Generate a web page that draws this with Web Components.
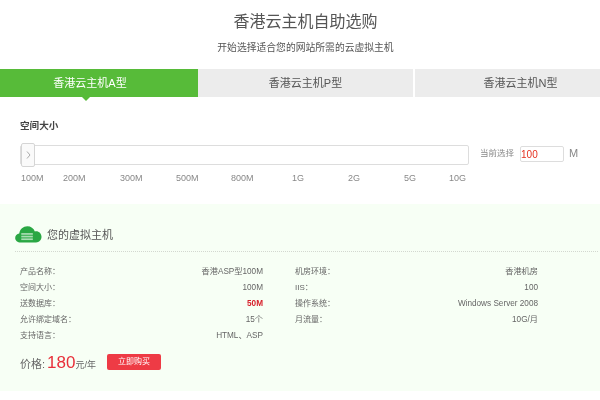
<!DOCTYPE html>
<html lang="zh">
<head>
<meta charset="utf-8">
<title>香港云主机自助选购</title>
<style>
    html, body { margin: 0; padding: 0; background: #fff; }
    body {
        width: 600px;
        height: 400px;
        overflow: hidden;
        font-family: "Liberation Sans", "Noto Sans CJK SC", sans-serif;
        color: #555;
    }
</style>
</head>
<body>
<page-header title="香港云主机自助选购" sub="开始选择适合您的网站所需的云虚拟主机"></page-header>
<tab-bar>
    <tab-item active style="width:198px;padding-right:18px">香港云主机A型</tab-item>
    <tab-item style="width:215px">香港云主机P型</tab-item>
    <tab-item style="flex:1;padding-left:26px">香港云主机N型</tab-item>
</tab-bar>
<space-picker></space-picker>
<host-summary>
    <spec-row slot="left" label="产品名称：">香港ASP型100M</spec-row>
    <spec-row slot="left" label="空间大小：">100M</spec-row>
    <spec-row slot="left" label="送数据库：" hot>50M</spec-row>
    <spec-row slot="left" label="允许绑定域名：">15个</spec-row>
    <spec-row slot="left" label="支持语言：">HTML、ASP</spec-row>
    <spec-row slot="right" label="机房环境：">香港机房</spec-row>
    <spec-row slot="right" label="IIS：">100</spec-row>
    <spec-row slot="right" label="操作系统：">Windows Server 2008</spec-row>
    <spec-row slot="right" label="月流量：">10G/月</spec-row>
</host-summary>

<script>
// small helper, every element just sets its markup once
class BaseEl extends HTMLElement {
    constructor() {
        super();
        this.attachShadow({mode: "open"});
    }
    connectedCallback() {
        this.shadowRoot.innerHTML = `<style>${this.getStyles()}</style>${this.getMarkup()}`;
    }
}

class PageHeader extends BaseEl {
    getStyles() {
        return `
            :host { display: block; height: 69px; padding: 13px 0 0 11px; box-sizing: border-box; text-align: center; filter: blur(.4px); }
            h1 { margin: 0; font-size: 16px; line-height: 18px; font-weight: 400; color: #555; }
            p { margin: 10px 0 0; font-size: 9.8px; line-height: 14px; color: #555; }
        `;
    }
    getMarkup() {
        return `<h1>${this.getAttribute("title")}</h1><p>${this.getAttribute("sub")}</p>`;
    }
}

class TabBar extends BaseEl {
    getStyles() {
        return `:host { display: flex; gap: 2px; height: 28px; } ::slotted(tab-item:first-child) { margin-right: -2px; }`;
    }
    getMarkup() { return `<slot></slot>`; }
}

class TabItem extends BaseEl {
    getStyles() {
        return `
            :host { display: block; position: relative; box-sizing: border-box; background: #ececec; color: #555; font-size: 11px; line-height: 28px; text-align: center; }
            :host([active]) { background: #57bb39; color: #fff; }
            span { display: block; filter: blur(.35px); }
            :host([active]) i {
                position: absolute; left: 82px; top: 28px; width: 0; height: 0;
                border: 4px solid transparent; border-top-color: #57bb39; border-bottom: 0;
            }
        `;
    }
    getMarkup() { return `<span><slot></slot></span><i></i>`; }
}

class SpacePicker extends BaseEl {
    getStyles() {
        return `
            :host { display: block; height: 107px; padding: 22px 20px 0; box-sizing: border-box; filter: blur(.4px); }
            h2 { margin: 0; font-size: 9.6px; line-height: 14px; font-weight: 700; color: #444; }
            .line { display: flex; align-items: center; margin-top: 10px; height: 24px; }
            .track { width: 449px; height: 20px; flex: none; box-sizing: border-box; border: 1px solid #ddd; border-radius: 2px; background: #fff; display: flex; align-items: center; }
            .knob { width: 14px; height: 24px; flex: none; box-sizing: border-box; border: 1px solid #d5d5d5; border-radius: 2px; background: #fafafa; display: flex; align-items: center; justify-content: center; }
            .now { margin: 0 0 6px 11px; font-size: 8.5px; color: #888; }
            .val { width: 44px; height: 16px; margin: 0 0 2px 6px; box-sizing: border-box; border: 1px solid #ddd; border-radius: 2px; color: #e5301f; font-size: 10px; line-height: 16px; }
            .unit { margin: 0 0 4px 5px; font-size: 11px; color: #888; }
            .scale { display: grid; grid-template-columns: 42px 57px 56px 55px 61px 56px 56px 45px 30px; margin: 4px 0 0 1px; font-size: 9px; line-height: 14px; color: #888; }
        `;
    }
    getMarkup() {
        const marks = ["100M","200M","300M","500M","800M","1G","2G","5G","10G"];
        return `
            <h2>空间大小</h2>
            <div class="line">
                <div class="track">
                    <div class="knob"><svg width="5" height="8" viewBox="0 0 5 8"><path d="M1 .5 4 4 1 7.5" fill="none" stroke="#aaa" stroke-width="1"/></svg></div>
                </div>
                <span class="now">当前选择</span>
                <div class="val">100</div>
                <span class="unit">M</span>
            </div>
            <div class="scale">${marks.map(m => `<span>${m}</span>`).join("")}</div>
        `;
    }
}

class HostSummary extends BaseEl {
    getStyles() {
        return `
            :host { display: block; height: 187px; padding: 21px 2px 0 15px; box-sizing: border-box; background: #f7fff5; }
            .inner { filter: blur(.4px); }
            .head { display: flex; align-items: center; gap: 5px; height: 18px; color: #555; font-size: 11px; }
            .rule { border-top: 1px dotted #d3d8d0; margin-top: 8px; }
            .cols { display: grid; grid-template-columns: 243px 243px; column-gap: 32px; margin: 12px 0 0 5px; }
            .buy { display: flex; align-items: baseline; margin: 7px 0 0 5px; color: #666; }
            .price-label { font-size: 11px; }
            .price { margin-left: 2px; font-size: 17px; color: #e8303a; line-height: 24px; }
            .per { font-size: 9px; }
            .btn { align-self: center; margin: 0 0 3px 11px; width: 54px; height: 16px; border-radius: 2px; background: #ee3b45; color: #fff; font-size: 8px; line-height: 16px; text-align: center; }
        `;
    }
    getMarkup() {
        return `
            <div class="inner">
            <div class="head">
                <svg width="27" height="17" viewBox="0 0 28 18" preserveAspectRatio="none">
                    <path d="M6 17.5C2.5 17.5 .2 15.3 .2 12.6 .2 10.2 2 8.3 4.4 7.9 5 3.6 8.6 .3 12.8 .3c3.6 0 6.6 2.2 7.8 5.5 .5-.1 1-.2 1.4-.2 3 0 5.5 2.6 5.5 5.9s-2.5 6-5.7 6z" fill="#2aa744"/>
                    <rect x="6.5" y="7.5" width="12" height="1.8" fill="#a9dcb2"/>
                    <rect x="6.5" y="10.3" width="12" height="1.8" fill="#a9dcb2"/>
                    <rect x="6.5" y="13.1" width="12" height="1.8" fill="#a9dcb2"/>
                </svg>
                <span>您的虚拟主机</span>
            </div>
            <div class="rule"></div>
            <div class="cols">
                <div><slot name="left"></slot></div>
                <div><slot name="right"></slot></div>
            </div>
            <div class="buy">
                <span class="price-label">价格:</span>
                <span class="price">180</span><span class="per">元/年</span>
                <span class="btn">立即购买</span>
            </div>
            </div>
        `;
    }
}

class SpecRow extends BaseEl {
    getStyles() {
        return `
            :host { display: flex; justify-content: space-between; height: 16px; font-size: 8px; line-height: 16px; color: #666; }
            :host([hot]) b { color: #d7202b; font-weight: 700; }
            b { font-weight: 400; font-size: 8.2px; }
        `;
    }
    getMarkup() {
        return `<span>${this.getAttribute("label")}</span><b><slot></slot></b>`;
    }
}

customElements.define("page-header", PageHeader);
customElements.define("tab-bar", TabBar);
customElements.define("tab-item", TabItem);
customElements.define("space-picker", SpacePicker);
customElements.define("host-summary", HostSummary);
customElements.define("spec-row", SpecRow);
</script>
</body>
</html>
